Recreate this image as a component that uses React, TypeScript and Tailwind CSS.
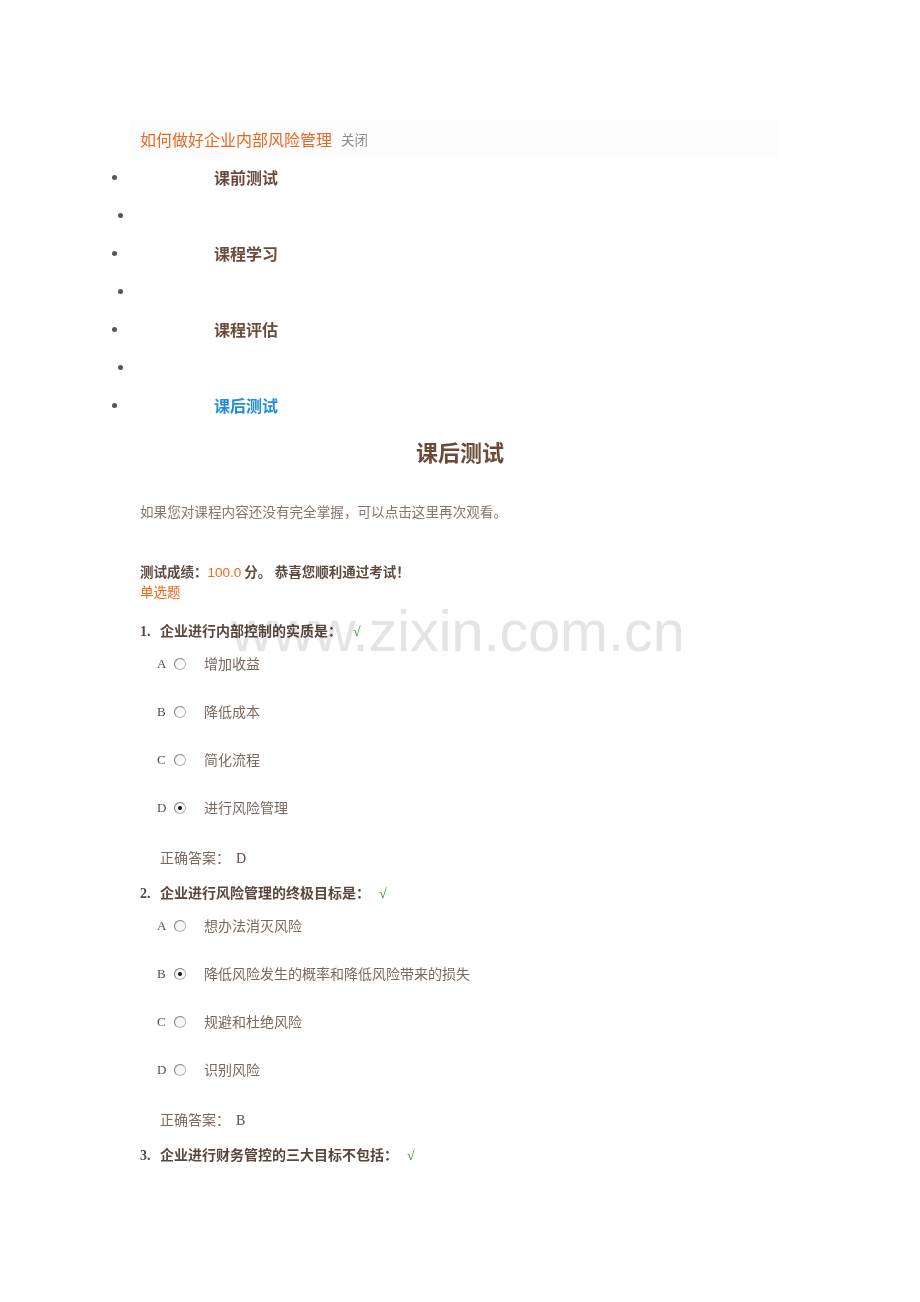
import React from "react";

type Question = {
  no: number;
  text: string;
  gap: string;
  options: { key: string; text: string; checked?: boolean }[];
  answer?: string;
};

const questions: Question[] = [
  {
    no: 1,
    text: "企业进行内部控制的实质是：",
    gap: "ml-[11px]",
    options: [
      { key: "A", text: "增加收益" },
      { key: "B", text: "降低成本" },
      { key: "C", text: "简化流程" },
      { key: "D", text: "进行风险管理", checked: true },
    ],
    answer: "D",
  },
  {
    no: 2,
    text: "企业进行风险管理的终极目标是：",
    gap: "ml-[9px]",
    options: [
      { key: "A", text: "想办法消灭风险" },
      { key: "B", text: "降低风险发生的概率和降低风险带来的损失", checked: true },
      { key: "C", text: "规避和杜绝风险" },
      { key: "D", text: "识别风险" },
    ],
    answer: "B",
  },
  {
    no: 3,
    text: "企业进行财务管控的三大目标不包括：",
    gap: "ml-[9px]",
    options: [],
  },
];

const navItems = [
  { label: "课前测试" },
  { label: "" },
  { label: "课程学习" },
  { label: "" },
  { label: "课程评估" },
  { label: "" },
  { label: "课后测试", active: true },
];

const Radio = ({ checked }: { checked?: boolean }) => (
  <span className="relative flex h-[12px] w-[12px] items-center justify-center rounded-full border border-[#b4b4b4] border-t-[#7e7e7e] border-l-[#7e7e7e] bg-gradient-to-br from-[#eeeeee] to-white">
    {checked && <span className="h-[4px] w-[4px] rounded-full bg-[#111]" />}
  </span>
);

const Check = () => <span className="text-[14px] font-bold text-[#1f9a28]">√</span>;

export default function App() {
  return (
    <div
      className="relative min-h-[1302px] w-[920px] bg-white text-[14px]"
      style={{ fontFamily: '"Liberation Serif", "Noto Sans CJK SC", serif' }}
    >
      {/* header band */}
      <div className="pt-[120px]">
        <div className="ml-[130px] flex h-[38px] w-[650px] items-center bg-[#fdfdfd] pl-[10px]">
          <span className="text-[16px] text-[#e8661f]" style={{ fontFamily: '"Noto Sans CJK SC", sans-serif' }}>
            如何做好企业内部风险管理
          </span>
          <span className="ml-[9px] text-[13.5px] text-[#8c8c8c]" style={{ fontFamily: '"Noto Sans CJK SC", sans-serif' }}>
            关闭
          </span>
        </div>

        <ul>
          {navItems.map((item, i) => (
            <li key={i} className="relative flex h-[38px] items-center">
              <span
                className={`absolute top-[17px] h-[5px] w-[5px] rounded-full bg-[#555] ${item.label ? "left-[112px]" : "left-[118px]"}`}
              />
              {item.label && (
                <span
                  className={`ml-[214px] text-[16px] font-bold ${item.active ? "text-[#1e8fd8]" : "text-[#6b4c3c]"}`}
                  style={{ fontFamily: '"Noto Sans CJK SC", sans-serif' }}
                >
                  {item.label}
                </span>
              )}
            </li>
          ))}
        </ul>
      </div>

      <h1
        className="flex h-[54px] items-center justify-center text-[22px] font-bold text-[#6b4a38]"
        style={{ fontFamily: '"Noto Sans CJK SC", sans-serif' }}
      >
        课后测试
      </h1>

      <div className="pl-[140px]">
        <p className="mt-[25px] flex h-[20px] items-center text-[13.6px] text-[#86766c]">
          如果您对课程内容还没有完全掌握，可以点击这里再次观看。
        </p>

        <div className="mt-[40px] flex h-[20px] items-center text-[13.5px] font-bold text-[#5e4b3f]">
          测试成绩：
          <span className="font-normal text-[#ee6a1c]" style={{ fontFamily: '"Liberation Sans", sans-serif' }}>
            100.0
          </span>
          <span className="ml-[3px]">分。 恭喜您顺利通过考试！</span>
        </div>
        <div className="flex h-[20px] items-center text-[13.5px] text-[#ee6a1c]">单选题</div>

        <div className="mt-[19px]">
          {questions.map((q) => (
            <div key={q.no} className="mb-[16px]">
              <div className="flex h-[18px] items-center font-bold text-[#5a463a]">
                <span className="w-[20px] text-[14px]">{q.no}.</span>
                <span>{q.text}</span>
                <span className={q.gap}>
                  <Check />
                </span>
              </div>
              {q.options.length > 0 && (
                <div>
                  {q.options.map((o) => (
                    <div key={o.key} className="flex h-[48px] items-center pl-[17px] text-[#7a685d]">
                      <span className="w-[17px] text-[13px] text-[#5e4b3f]">{o.key}</span>
                      <Radio checked={o.checked} />
                      <span className="ml-[18px]">{o.text}</span>
                    </div>
                  ))}
                  <div className="mt-[16px] flex h-[20px] items-center pl-[20px] text-[#7a685d]">
                    正确答案：
                    <span className="ml-[6px] text-[#5e4b3f]">{q.answer}</span>
                  </div>
                </div>
              )}
            </div>
          ))}
        </div>
      </div>

      {/* watermark */}
      <div
        className="pointer-events-none absolute top-[603px] left-[231px] text-[57.5px] leading-none text-[#e4e4e4] mix-blend-multiply"
        style={{ fontFamily: '"Liberation Sans", Arial, sans-serif' }}
      >
        www.zixin.com.cn
      </div>
    </div>
  );
}
